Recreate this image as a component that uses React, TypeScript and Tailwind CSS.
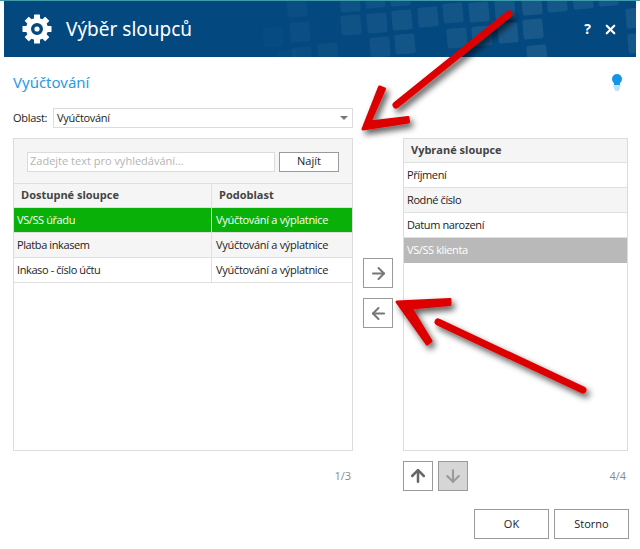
import React from 'react';
import { ArrowLeft, ArrowRight, ArrowUp, ArrowDown, X } from 'lucide-react';

// [x, y, opacity] of the pale tiles in the header, in page coordinates
const tiles: [number, number, number][] = [
  [263, 27, 0.015], [277, 50, 0.02], [287, -3, 0.03], [290, 22, 0.03], [292, 47, 0.03], [318, 43, 0.035],
  [340, -8, 0.05], [341, 15, 0.05], [365, -12, 0.05], [367, 13, 0.06], [370, 37, 0.06], [390, -14, 0.06],
  [392, 10, 0.07], [395, 34, 0.07], [418, 7, 0.07], [443, 3, 0.07], [447, 28, 0.07], [469, 2, 0.08],
  [472, 26, 0.08], [495, 0, 0.08], [498, 23, 0.09], [522, -5, 0.09], [523, 19, 0.09], [527, 45, 0.09],
  [547, -8, 0.08], [573, -11, 0.08], [598, -14, 0.08], [626, 8, 0.08], [628, 33, 0.08],
];

const Gear = () => (
  <svg width="30" height="30" viewBox="0 0 30 30" className="shrink-0">
    {[0, 45, 90, 135, 180, 225, 270, 315].map((a) => (
      <rect key={a} x="12" y="0.5" width="6" height="7" rx="0.5" fill="#fff" transform={`rotate(${a} 15 15)`} />
    ))}
    <circle cx="15" cy="15" r="8.5" fill="none" stroke="#fff" strokeWidth="5" />
    <circle cx="15" cy="15" r="2.6" fill="#fff" />
  </svg>
);

const Bulb = () => (
  <svg width="14" height="20" viewBox="0 0 14 20">
    <circle cx="7" cy="6" r="5" fill="#1296ea" />
    <rect x="4" y="9" width="6" height="3" fill="#1296ea" />
    <rect x="3.5" y="12.5" width="7" height="1" fill="#7cc4f2" />
    <rect x="4" y="14.5" width="6" height="1" fill="#7cc4f2" />
    <rect x="5" y="16.5" width="4" height="1" fill="#7cc4f2" />
  </svg>
);

const RedArrows = () => (
  <svg width="640" height="549" className="absolute left-0 top-0 pointer-events-none">
    <defs>
      <filter id="arrow-shadow" x="-20%" y="-20%" width="150%" height="150%">
        <feDropShadow dx="3" dy="4" stdDeviation="3" floodColor="#000" floodOpacity="0.65" />
      </filter>
    </defs>
    <g fill="#dd0000" stroke="#dd0000" strokeLinecap="round" strokeLinejoin="round" filter="url(#arrow-shadow)">
      <path d="M509 14 L396 105" strokeWidth="7" fill="none" />
      <path d="M363 129 L379.5 87 L384.5 89 L370 122 L408 117.5 L408.5 122 Z" strokeWidth="3" />
      <path d="M438 322 L583 390" strokeWidth="7" fill="none" />
      <path d="M397 302 L450 299.5 L450 304.5 L411 308 L431 341 L427 344 Z" strokeWidth="3" />
    </g>
  </svg>
);

const IconButton = ({ children, disabled }: { children: React.ReactNode; disabled?: boolean }) => (
  <button className={`w-[30px] h-[30px] flex items-center justify-center border border-[#9a9a9a] ${disabled ? 'bg-[#d6d6d6]' : 'bg-white'}`}>
    {children}
  </button>
);

const TextButton = ({ label, className }: { label: string; className: string }) => (
  <button className={`border border-[#9a9a9a] bg-white text-[#222] ${className}`}>{label}</button>
);

const rows = [
  { name: 'VS/SS úřadu', active: true },
  { name: 'Platba inkasem', alt: true },
  { name: 'Inkaso - číslo účtu' },
];

const picked = [
  { name: 'Příjmení' },
  { name: 'Rodné číslo', alt: true },
  { name: 'Datum narození' },
  { name: 'VS/SS klienta', selected: true },
];

export default function App() {
  return (
    <div className="relative w-[640px] h-[549px] overflow-hidden bg-white text-[11px] text-[#222] font-['Open_Sans',sans-serif]">
      <div className="h-px bg-[#3f9cab]" />
      {/* Header */}
      <header className="relative mx-[4px] h-[56px] bg-[#03497f] overflow-hidden flex items-center pl-[18px] pr-[18px]">
        <svg width="632" height="56" className="absolute left-0 top-0">
          {tiles.map(([x, y, o]) => (
            <rect key={`${x}-${y}`} x={x - 4} y={y - 1} width="20" height="20" rx="2.5" fill="#fff" fillOpacity={o} transform={`rotate(-5 ${x + 6} ${y + 9})`} />
          ))}
        </svg>
        <div className="relative"><Gear /></div>
        <h1 className="relative ml-[14px] text-[19px] leading-none text-white font-['Noto_Sans',sans-serif]">Výběr sloupců</h1>
        <div className="relative ml-auto flex items-center gap-[12px] text-white font-['Noto_Sans',sans-serif]">
          <span className="text-[14px] font-bold leading-none">?</span>
          <X size={15} strokeWidth={3.5} />
        </div>
      </header>

      <div className="pl-[13px] pr-[11px]">
        <div className="h-[51px] flex items-center justify-between">
          <h2 className="text-[15px] text-[#2a9be2] font-['Noto_Sans',sans-serif]">Vyúčtování</h2>
          <div className="mr-[5px] mt-[1px]"><Bulb /></div>
        </div>

        {/* Oblast */}
        <div className="flex items-center h-[20px]">
          <span className="w-[40px] tracking-[-0.3px]">Oblast:</span>
          <div className="w-[300px] h-[20px] border border-[#dcdcdc] flex items-center justify-between pl-[3px] pr-[4px]">
            <span className="tracking-[-0.3px]">Vyúčtování</span>
            <span className="w-0 h-0 border-x-[4px] border-x-transparent border-t-[4px] border-t-[#777]" />
          </div>
        </div>

        <div className="mt-[10px] grid grid-cols-[340px_30px_225px] grid-rows-[313px_30px] gap-x-[10px] gap-y-[10px]">
          {/* Available columns */}
          <div className="border border-[#dcdcdc]">
            <div className="h-[44px] bg-[#f5f5f5] flex items-center pl-[13px] gap-[4px] pt-[1px]">
              <div className="w-[248px] h-[20px] bg-white border border-[#dcdcdc] flex items-center pl-[2px] text-[#b4b4b4]">Zadejte text pro vyhledávání...</div>
              <TextButton label="Najít" className="w-[60px] h-[20px]" />
            </div>
            <div className="grid grid-cols-[198px_1fr] h-[25px] bg-[#f5f5f5] border-y border-[#e0e0e0] font-bold text-[#444] items-center">
              <span className="pl-[7px] h-full flex items-center border-r border-[#e0e0e0]">Dostupné sloupce</span>
              <span className="pl-[7px]">Podoblast</span>
            </div>
            {rows.map((r) => (
              <div key={r.name} className={`grid grid-cols-[198px_1fr] h-[25px] border-b border-[#e0e0e0] items-center ${r.active ? 'bg-[#08b008] text-white' : r.alt ? 'bg-[#f5f5f5]' : 'bg-white'}`}>
                <span className={`pl-[3px] h-full flex items-center tracking-[-0.4px] border-r ${r.active ? 'border-white' : 'border-[#e0e0e0]'}`}>{r.name}</span>
                <span className="pl-[4px] tracking-[-0.3px]">Vyúčtování a výplatnice</span>
              </div>
            ))}
          </div>

          {/* Move buttons */}
          <div className="pt-[120px] flex flex-col gap-[10px]">
            <IconButton><ArrowRight size={19} strokeWidth={2.5} color="#777" /></IconButton>
            <IconButton><ArrowLeft size={19} strokeWidth={2.5} color="#777" /></IconButton>
          </div>

          {/* Selected columns */}
          <div className="border border-[#dcdcdc]">
            <div className="h-[24px] bg-[#f5f5f5] border-b border-[#e0e0e0] flex items-center pl-[7px] font-bold text-[#444]">Vybrané sloupce</div>
            {picked.map((r) => (
              <div key={r.name} className={`h-[25px] border-b border-[#e0e0e0] flex items-center pl-[3px] tracking-[-0.4px] ${r.selected ? 'bg-[#b9b9b9] text-white border-b-[#b9b9b9]' : r.alt ? 'bg-[#f5f5f5]' : 'bg-white'}`}>
                {r.name}
              </div>
            ))}
          </div>

          <div className="flex items-center justify-end pr-[2px] text-[#8a8a8a]">1/3</div>
          <div />
          <div className="flex items-center">
            <div className="flex gap-[5px]">
              <IconButton><ArrowUp size={20} strokeWidth={3} color="#666" /></IconButton>
              <IconButton disabled><ArrowDown size={20} strokeWidth={2.5} color="#9a9a9a" /></IconButton>
            </div>
            <span className="ml-auto pr-[2px] text-[#8a8a8a]">4/4</span>
          </div>
        </div>

        {/* Footer */}
        <div className="mt-[18px] flex justify-end gap-[5px]">
          <TextButton label="OK" className="w-[75px] h-[30px]" />
          <TextButton label="Storno" className="w-[75px] h-[30px]" />
        </div>
      </div>

      <RedArrows />
    </div>
  );
}
